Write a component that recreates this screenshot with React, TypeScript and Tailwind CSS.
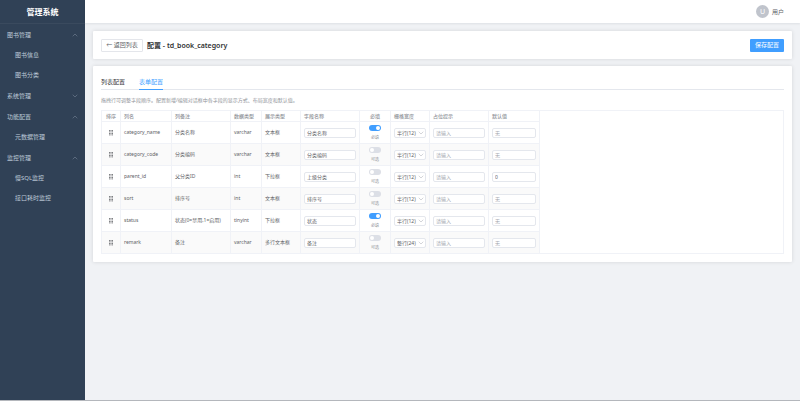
import React, { useState } from 'react';
import { ChevronDown, ChevronUp } from 'lucide-react';

interface MenuSection {
  title: string;
  open: boolean;
  items: string[];
}

interface FieldRow {
  name: string;
  comment: string;
  dataType: string;
  displayType: string;
  label: string;
  required: boolean;
  span: string;
  defaultValue: string;
}

const menu: MenuSection[] = [
  { title: '图书管理', open: true, items: ['图书信息', '图书分类'] },
  { title: '系统管理', open: false, items: [] },
  { title: '功能配置', open: true, items: ['元数据管理'] },
  { title: '监控管理', open: true, items: ['慢SQL监控', '接口耗时监控'] },
];

const initialFields: FieldRow[] = [
  { name: 'category_name', comment: '分类名称', dataType: 'varchar', displayType: '文本框', label: '分类名称', required: true, span: '12', defaultValue: '' },
  { name: 'category_code', comment: '分类编码', dataType: 'varchar', displayType: '文本框', label: '分类编码', required: false, span: '12', defaultValue: '' },
  { name: 'parent_id', comment: '父分类ID', dataType: 'int', displayType: '下拉框', label: '上级分类', required: false, span: '12', defaultValue: '0' },
  { name: 'sort', comment: '排序号', dataType: 'int', displayType: '文本框', label: '排序号', required: false, span: '12', defaultValue: '' },
  { name: 'status', comment: '状态(0=禁用,1=启用)', dataType: 'tinyint', displayType: '下拉框', label: '状态', required: true, span: '12', defaultValue: '' },
  { name: 'remark', comment: '备注', dataType: 'varchar', displayType: '多行文本框', label: '备注', required: false, span: '24', defaultValue: '' },
];

const columns = [
  { title: '排序', width: 'w-[19px]', center: true },
  { title: '列名', width: 'w-[51px]' },
  { title: '列备注', width: 'w-[59px]' },
  { title: '数据类型', width: 'w-[31px]' },
  { title: '展示类型', width: 'w-[39px]' },
  { title: '字段名称', width: 'w-[59px]' },
  { title: '必填', width: 'w-[31px]', center: true },
  { title: '栅格宽度', width: 'w-[39px]' },
  { title: '占位提示', width: 'w-[59px]' },
  { title: '默认值', width: 'w-[51px]' },
];

const cell = 'border-r border-b border-[#f0f2f7] px-[3px] py-0';
const inputBox =
  'block h-[10px] w-full rounded-[2px] border border-[#e4e7ed] bg-white px-[2px] text-[5px] leading-[8px] text-[#606266] outline-none placeholder:text-[#a8abb2]';

const Sidebar: React.FC = () => (
  <aside className="w-[85px] shrink-0 bg-[#304156] text-[#bfcbd9]">
    <h1 className="flex h-[24px] items-center justify-center border-b border-[#3a4a5e] text-[8px] font-bold text-white">
      管理系统
    </h1>
    <nav className="text-[6px]">
      {menu.map((section) => (
        <div key={section.title}>
          <button type="button" className="flex h-[21px] w-full items-center justify-between pr-[6px] pl-[7px]">
            <span>{section.title}</span>
            {section.open ? (
              <ChevronUp size={8} strokeWidth={1.5} className="text-[#8593a5]" />
            ) : (
              <ChevronDown size={8} strokeWidth={1.5} className="text-[#8593a5]" />
            )}
          </button>
          {section.items.map((item) => (
            <a key={item} href="#" className="flex h-[20px] items-center pl-[15px]">
              {item}
            </a>
          ))}
        </div>
      ))}
    </nav>
  </aside>
);

const DragHandle: React.FC = () => (
  <svg viewBox="0 0 4 6" className="mx-auto block h-[6px] w-[4px]" fill="#606266">
    {[0, 1.5, 3, 4.5].map((y) => (
      <g key={y}>
        <rect x="0" y={y} width="1.6" height="0.8" />
        <rect x="2.4" y={y} width="1.6" height="0.8" />
      </g>
    ))}
  </svg>
);

export default function App() {
  const [fields, setFields] = useState<FieldRow[]>(initialFields);

  const update = (index: number, patch: Partial<FieldRow>) => {
    setFields(fields.map((f, i) => (i === index ? { ...f, ...patch } : f)));
  };

  return (
    <div className="flex min-h-screen border-b border-[#b4b7bc] bg-[#f0f2f5] font-['Noto_Sans','Noto_Sans_CJK_SC',sans-serif] leading-none">
      <Sidebar />

      <div className="flex min-w-0 flex-1 flex-col">
        <header className="flex h-[23px] items-center justify-end gap-[3px] bg-white pr-[16px] text-[6px] text-[#606266] shadow-[0_1px_2px_rgba(0,21,41,0.08)]">
          <span className="flex h-[13px] w-[13px] items-center justify-center rounded-full bg-[#c0c4cc] text-[7px] text-white">U</span>
          <span>用户</span>
        </header>

        <main className="flex flex-col gap-[7px] p-[8px]">
          <section className="flex h-[28px] items-center rounded-[1px] bg-white px-[8px] shadow-[0_0_4px_rgba(0,0,0,0.12)]">
            <button type="button" className="h-[13px] w-[42px] rounded-[1px] border border-[#e4e6eb] bg-white text-[6px] text-[#606266]">
              ← 返回列表
            </button>
            <h2 className="ml-[4px] text-[7px] font-semibold text-[#303133]">配置 - td_book_category</h2>
            <button type="button" className="ml-auto h-[13px] w-[34px] rounded-[1px] bg-[#409eff] text-[6px] text-white">
              保存配置
            </button>
          </section>

          <section className="rounded-[1px] bg-white p-[8px] shadow-[0_0_4px_rgba(0,0,0,0.12)]">
            <div role="tablist" className="flex h-[16px] gap-[14px] border-b border-[#e4e7ed] text-[6px]">
              <button type="button" role="tab" aria-selected="false" className="text-[#303133]">
                列表配置
              </button>
              <button type="button" role="tab" aria-selected="true" className="-mb-px border-b border-[#409eff] text-[#409eff]">
                表单配置
              </button>
            </div>

            <p className="mt-[7px] text-[5px] leading-[6px] text-[#909399]">
              拖拽行可调整字段顺序。配置新增/编辑对话框中各字段的显示方式、布局宽度和默认值。
            </p>

            <div className="mt-[7px] overflow-hidden border border-l-0 border-[#f0f2f7]">
              <table className="w-[438px] table-fixed border-separate border-spacing-0 border-l border-[#f0f2f7] text-left text-[5px] text-[#606266]">
                <thead>
                  <tr className="h-[11px] text-[#909399]">
                    {columns.map((col) => (
                      <th key={col.title} className={`${cell} ${col.width} font-medium whitespace-nowrap ${col.center ? 'text-center' : ''}`}>
                        {col.title}
                      </th>
                    ))}
                  </tr>
                </thead>
                <tbody>
                  {fields.map((field, i) => (
                    <tr key={field.name} className="h-[22px] whitespace-nowrap last:h-[21px] even:bg-[#fafafa] last:*:border-b-0">
                      <td className={cell}>
                        <DragHandle />
                      </td>
                      <td className={cell}>{field.name}</td>
                      <td className={cell}>{field.comment}</td>
                      <td className={cell}>{field.dataType}</td>
                      <td className={cell}>{field.displayType}</td>
                      <td className={cell}>
                        <input
                          aria-label="字段名称"
                          className={inputBox}
                          value={field.label}
                          onChange={(e) => update(i, { label: e.target.value })}
                        />
                      </td>
                      <td className={cell}>
                        <label className="flex flex-col items-center gap-[4px] text-[#909399]">
                          <input
                            type="checkbox"
                            role="switch"
                            className="block h-[6px] w-[12px] appearance-none rounded-full bg-[#dcdfe6] p-px before:block before:h-[4px] before:w-[4px] before:rounded-full before:bg-white checked:bg-[#409eff] checked:before:ml-auto"
                            checked={field.required}
                            onChange={(e) => update(i, { required: e.target.checked })}
                          />
                          <span className="text-[4px] leading-[5px]">{field.required ? '必填' : '可选'}</span>
                        </label>
                      </td>
                      <td className={cell}>
                        <div className="relative">
                          <select
                            aria-label="栅格宽度"
                            className={`${inputBox} appearance-none`}
                            value={field.span}
                            onChange={(e) => update(i, { span: e.target.value })}
                          >
                            <option value="12">半行(12)</option>
                            <option value="24">整行(24)</option>
                          </select>
                          <ChevronDown size={8} strokeWidth={1.5} className="pointer-events-none absolute top-px right-px text-[#a8abb2]" />
                        </div>
                      </td>
                      <td className={cell}>
                        <input aria-label="占位提示" className={inputBox} placeholder="请输入" />
                      </td>
                      <td className={cell}>
                        <input
                          aria-label="默认值"
                          className={inputBox}
                          placeholder="无"
                          value={field.defaultValue}
                          onChange={(e) => update(i, { defaultValue: e.target.value })}
                        />
                      </td>
                    </tr>
                  ))}
                </tbody>
              </table>
            </div>
          </section>
        </main>
      </div>
    </div>
  );
}
